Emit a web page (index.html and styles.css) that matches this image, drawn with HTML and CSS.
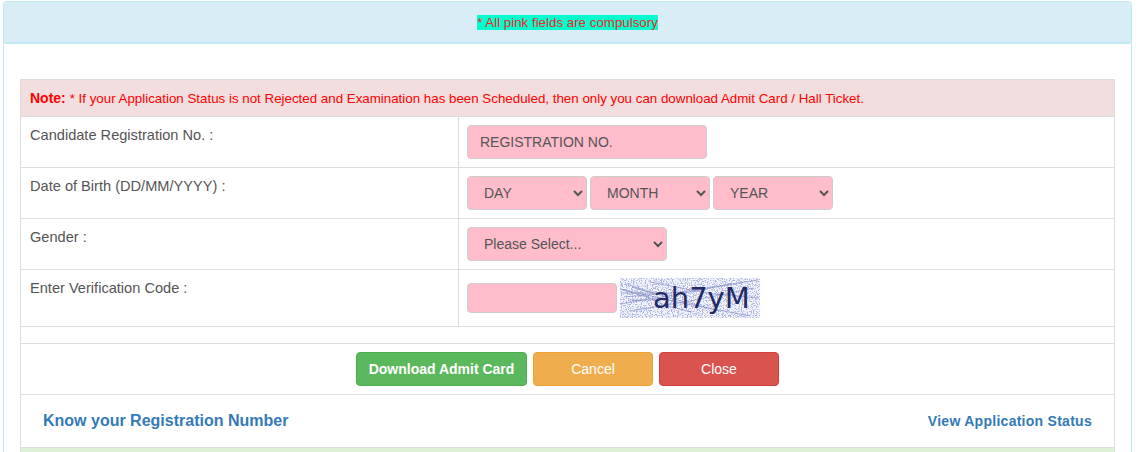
FILE: index.html
```html
<!DOCTYPE html>
<html lang="en">
<head>
    <meta charset="UTF-8">
    <meta name="viewport" content="width=device-width, initial-scale=1.0">
    <title>Download Admit Card</title>
    <link rel="stylesheet" href="styles.css">
</head>
<body>

<div class="panel">
    <div class="panel-heading">
        <span class="compulsory">* All pink fields are compulsory</span>
    </div>
    <div class="panel-body">
        <table class="form-table">
            <colgroup>
                <col class="label-col">
                <col>
            </colgroup>
            <tr class="note-row">
                <td colspan="2"><b>Note:</b> <small>* If your Application Status is not Rejected and Examination has been Scheduled, then only you can download Admit Card / Hall Ticket.</small></td>
            </tr>
            <tr>
                <td class="label-cell">Candidate Registration No. :</td>
                <td><input type="text" class="field reg-field" placeholder="REGISTRATION NO."></td>
            </tr>
            <tr>
                <td class="label-cell">Date of Birth (DD/MM/YYYY) :</td>
                <td class="dob-cell">
                    <select class="field dob-field"><option>DAY</option></select>
                    <select class="field dob-field"><option>MONTH</option></select>
                    <select class="field dob-field"><option>YEAR</option></select>
                </td>
            </tr>
            <tr>
                <td class="label-cell">Gender :</td>
                <td><select class="field gender-field"><option>Please Select...</option></select></td>
            </tr>
            <tr>
                <td class="label-cell">Enter Verification Code :</td>
                <td>
                    <div class="captcha-wrap">
                        <input type="text" class="field code-field">
                        <svg class="captcha" width="140" height="40" viewBox="0 0 140 40">
                            <filter id="speckle" x="0" y="0" width="100%" height="100%">
                                <feTurbulence type="fractalNoise" baseFrequency="0.8" numOctaves="2" seed="4"/>
                                <feColorMatrix values="0 0 0 0 0.42  0 0 0 0 0.47  0 0 0 0 0.76  0 0 0 8 -4"/>
                            </filter>
                            <rect width="140" height="40" fill="#f1f2fa"/>
                            <rect width="140" height="40" filter="url(#speckle)"/>
                            <g stroke="#6a77b8" stroke-width="0.7" fill="none" opacity="0.75">
                                <path d="M0 11 L62 25 L130 38"/>
                                <path d="M4 19 L60 14 L138 2"/>
                                <path d="M6 6 L50 20 L100 33"/>
                                <path d="M0 26 L48 18 L112 6"/>
                                <path d="M10 33 L70 23 L134 10"/>
                                <path d="M16 13 L44 27 L72 34"/>
                                <path d="M2 15 L42 15"/>
                                <path d="M8 22 L40 22"/>
                                <path d="M3 12 L30 20"/>
                                <path d="M12 9 L38 17"/>
                                <path d="M30 4 L92 16 L139 20"/>
                            </g>
                            <text class="captcha-text" x="33" y="30">ah7yM</text>
                        </svg>
                    </div>
                </td>
            </tr>
            <tr class="spacer-row"><td colspan="2"></td></tr>
            <tr>
                <td colspan="2" class="button-cell">
                    <button class="btn btn-green">Download Admit Card</button>
                    <button class="btn btn-orange">Cancel</button>
                    <button class="btn btn-red">Close</button>
                </td>
            </tr>
            <tr>
                <td colspan="2" class="links-cell">
                    <div class="links">
                        <a href="#" class="link-big">Know your Registration Number</a>
                        <a href="#" class="link-small">View Application Status</a>
                    </div>
                </td>
            </tr>
            <tr class="green-row"><td colspan="2"></td></tr>
        </table>
    </div>
</div>

</body>
</html>
```

FILE: styles.css
```css
*{
    box-sizing: border-box;
}
html, body{
    height: 452px;
    overflow: hidden;
}
body{
    margin: 0;
    padding: 1px 7px 0 3px;
    background-color: #fff;
    color: #555;
    font-family: "Liberation Sans", Arial, sans-serif;
    font-size: 14px;
    line-height: 20px;
}
.panel{
    border: 1px solid #bce8f1;
    border-bottom: none;
    border-radius: 4px 4px 0 0;
    height: 451px;
    overflow: hidden;
}
.panel-heading{
    height: 42px;
    background-color: #d9edf7;
    border-bottom: 2px solid #bce8f1;
    border-radius: 3px;
    padding-top: 12px;
    text-align: center;
    line-height: 16px;
}
.compulsory{
    background-color: #00ffcc;
    color: #f5222d;
    font-size: 13.33px;
}
.panel-body{
    padding: 35px 16px 0;
}
.form-table{
    width: 100%;
    border-collapse: collapse;
    table-layout: fixed;
}
.label-col{
    width: 438px;
}
.form-table td{
    border: 1px solid #ddd;
    padding: 8px;
    vertical-align: top;
}
.note-row td{
    background-color: #f2dede;
    color: #f00;
    height: 37px;
    padding: 0 0 0 9px;
    vertical-align: middle;
}
.note-row small{
    font-size: 13.33px;
}
.form-table .label-cell{
    padding-left: 9px;
    padding-top: 8px;
    font-size: 14.6px;
}
.field{
    display: block;
    height: 34px;
    background-color: #ffbccb;
    border: 1px solid #ccc;
    border-radius: 4px;
    color: #555;
    font-family: inherit;
    font-size: 14px;
    padding: 6px 12px;
    outline: none;
}
.field::placeholder{
    color: #555;
    opacity: 1;
}
.reg-field{
    width: 240px;
}
.dob-cell{
    font-size: 0;
}
.dob-field{
    display: inline-block;
    width: 120px;
    margin-right: 3px;
}
.gender-field{
    width: 200px;
}
.captcha-wrap{
    display: flex;
    align-items: center;
    gap: 3px;
}
.code-field{
    width: 150px;
    height: 30px;
}
.captcha{
    display: block;
}
.captcha-text{
    font-family: "DejaVu Sans", sans-serif;
    font-size: 29px;
    fill: #1f2a66;
}
.form-table .spacer-row td{
    height: 17px;
    padding: 0;
}
.button-cell{
    text-align: center;
    font-size: 0;
}
.btn{
    height: 34px;
    border: 1px solid transparent;
    border-radius: 4px;
    color: #fff;
    font-family: inherit;
    font-size: 14px;
    margin: 0 3px;
    padding: 6px 12px;
}
.btn-green{
    width: 171px;
    background-color: #5cb85c;
    border-color: #4cae4c;
    font-weight: bold;
    padding: 6px 0;
}
.btn-orange{
    width: 120px;
    background-color: #f0ad4e;
    border-color: #eea236;
}
.btn-red{
    width: 120px;
    background-color: #d9534f;
    border-color: #d43f3a;
}
.form-table .links-cell{
    height: 53px;
    padding: 0 22px;
    vertical-align: middle;
}
.links{
    display: flex;
    justify-content: space-between;
    align-items: baseline;
}
.links a{
    color: #337ab7;
    font-weight: bold;
    text-decoration: none;
}
.link-big{
    font-size: 16px;
}
.link-small{
    font-size: 14px;
    letter-spacing: 0.27px;
}
.form-table .green-row td{
    background-color: #dff0d8;
    height: 5px;
    padding: 0;
}
```
